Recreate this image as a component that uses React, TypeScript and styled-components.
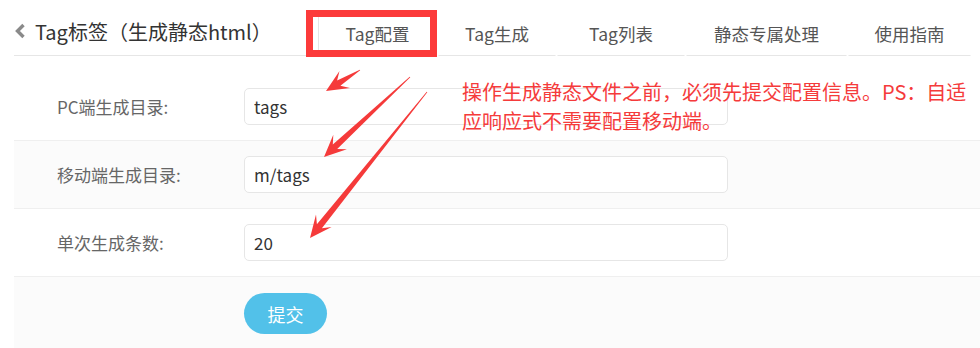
import React from 'react'
import styled, { createGlobalStyle } from 'styled-components'

const GlobalStyle = createGlobalStyle`
  body {
    margin: 0;
    background: #fff;
    font-family: "Noto Sans CJK SC", "Noto Sans", sans-serif;
    color: #333;
  }
`

const Page = styled.div`
  position: relative;
  width: 980px;
  height: 348px;
  overflow: hidden;
`

const Header = styled.div`
  display: flex;
  align-items: stretch;
  height: 56px;
  padding-left: 14px;
`

const TitleBlock = styled.div`
  display: flex;
  align-items: center;
  width: 304px;
  border-bottom: 1px solid #e6e6e6;
  box-sizing: border-box;
  padding-top: 7px;
`

const Title = styled.h1`
  margin: 0 0 0 9px;
  font-size: 20px;
  font-weight: 400;
  color: #333;
`

const Tabs = styled.nav`
  display: flex;
  flex: 1;
  gap: 1px;
`

const Tab = styled.div<{ $w: number; $active?: boolean }>`
  width: ${(p) => p.$w}px;
  display: flex;
  align-items: center;
  justify-content: center;
  box-sizing: border-box;
  margin-top: 17px;
  padding-bottom: 5px;
  font-size: 17.5px;
  color: #555;
  border-bottom: 1px solid ${(p) => (p.$active ? 'transparent' : '#e6e6e6')};
  border-left: 1px solid ${(p) => (p.$active ? '#e4e4e4' : 'transparent')};
  border-right: 1px solid ${(p) => (p.$active ? '#e4e4e4' : 'transparent')};
`

const Form = styled.div`
  margin-left: 14px;
  padding-top: 16px;
`

const Row = styled.div<{ $shade?: boolean }>`
  display: grid;
  grid-template-columns: 230px 484px;
  align-items: center;
  height: 68px;
  box-sizing: border-box;
  background: ${(p) => (p.$shade ? '#fbfbfb' : '#fff')};
  & + & {
    border-top: 1px solid #efefef;
  }
`

const Label = styled.label`
  padding-left: 43px;
  font-size: 17px;
  color: #666;
`

const Input = styled.input`
  height: 37px;
  box-sizing: border-box;
  border: 1px solid #e6e6e6;
  border-radius: 5px;
  padding: 0 9px;
  font-family: inherit;
  font-size: 17px;
  color: #333;
  background: #fff;
  outline: none;
`

const ButtonRow = styled(Row)`
  align-items: start;
  padding-top: 16px;
  height: 80px;
`

const Submit = styled.button`
  grid-column: 2;
  width: 83px;
  height: 41px;
  border: none;
  border-radius: 21px;
  background: #52c1e9;
  color: #fff;
  font-family: inherit;
  font-size: 18px;
`

const HighlightBox = styled.div`
  position: absolute;
  left: 306px;
  top: 10px;
  width: 131px;
  height: 47px;
  box-sizing: border-box;
  border: 7px solid #fc3a3a;
  pointer-events: none;
`

const Note = styled.div`
  position: absolute;
  left: 462px;
  top: 77px;
  width: 515px;
  font-size: 20px;
  line-height: 29px;
  color: #f53b3b;
`

const Overlay = styled.svg`
  position: absolute;
  left: 0;
  top: 0;
  pointer-events: none;
`

const arrow = (tx: number, ty: number, px: number, py: number) => {
  const dx = px - tx
  const dy = py - ty
  const len = Math.hypot(dx, dy)
  const ux = dx / len
  const uy = dy / len
  const nx = -uy
  const ny = ux
  const head = 22
  const neck = 15
  const hw = 10
  const sw = 3.2
  const tw = 0.4
  const pts = [
    [tx + nx * tw, ty + ny * tw],
    [px - ux * neck + nx * sw, py - uy * neck + ny * sw],
    [px - ux * head + nx * hw, py - uy * head + ny * hw],
    [px, py],
    [px - ux * head - nx * hw, py - uy * head - ny * hw],
    [px - ux * neck - nx * sw, py - uy * neck - ny * sw],
    [tx - nx * tw, ty - ny * tw],
  ]
  return pts.map((p) => p.map((v) => v.toFixed(1)).join(',')).join(' ')
}

const tabs = [
  { label: 'Tag配置', w: 119, active: true },
  { label: 'Tag生成', w: 118 },
  { label: 'Tag列表', w: 128 },
  { label: '静态专属处理', w: 161 },
  { label: '使用指南', w: 123 },
]

const fields = [
  { label: 'PC端生成目录:', value: 'tags' },
  { label: '移动端生成目录:', value: 'm/tags' },
  { label: '单次生成条数:', value: '20' },
]

export default function App() {
  return (
    <Page>
      <GlobalStyle />
      <Header>
        <TitleBlock>
          <svg width="12" height="16" viewBox="0 0 12 16">
            <polyline points="9.5,2 3.5,8 9.5,14" fill="none" stroke="#8a8a8a" strokeWidth="3.4" />
          </svg>
          <Title>Tag标签（生成静态html）</Title>
        </TitleBlock>
        <Tabs>
          {tabs.map((t) => (
            <Tab key={t.label} $w={t.w} $active={t.active}>
              {t.label}
            </Tab>
          ))}
        </Tabs>
      </Header>

      <Form>
        {fields.map((f, i) => (
          <Row key={f.label} $shade={i % 2 === 1}>
            <Label>{f.label}</Label>
            <Input defaultValue={f.value} />
          </Row>
        ))}
        <ButtonRow $shade>
          <Submit>提交</Submit>
        </ButtonRow>
      </Form>

      <HighlightBox />
      <Note>操作生成静态文件之前，必须先提交配置信息。PS：自适应响应式不需要配置移动端。</Note>
      <Overlay width="980" height="348">
        <polygon points={arrow(360, 70, 326, 91)} fill="#f53a3a" />
        <polygon points={arrow(410, 77, 324, 157)} fill="#f53a3a" />
        <polygon points={arrow(427, 92, 310, 238)} fill="#f53a3a" />
      </Overlay>
    </Page>
  )
}
